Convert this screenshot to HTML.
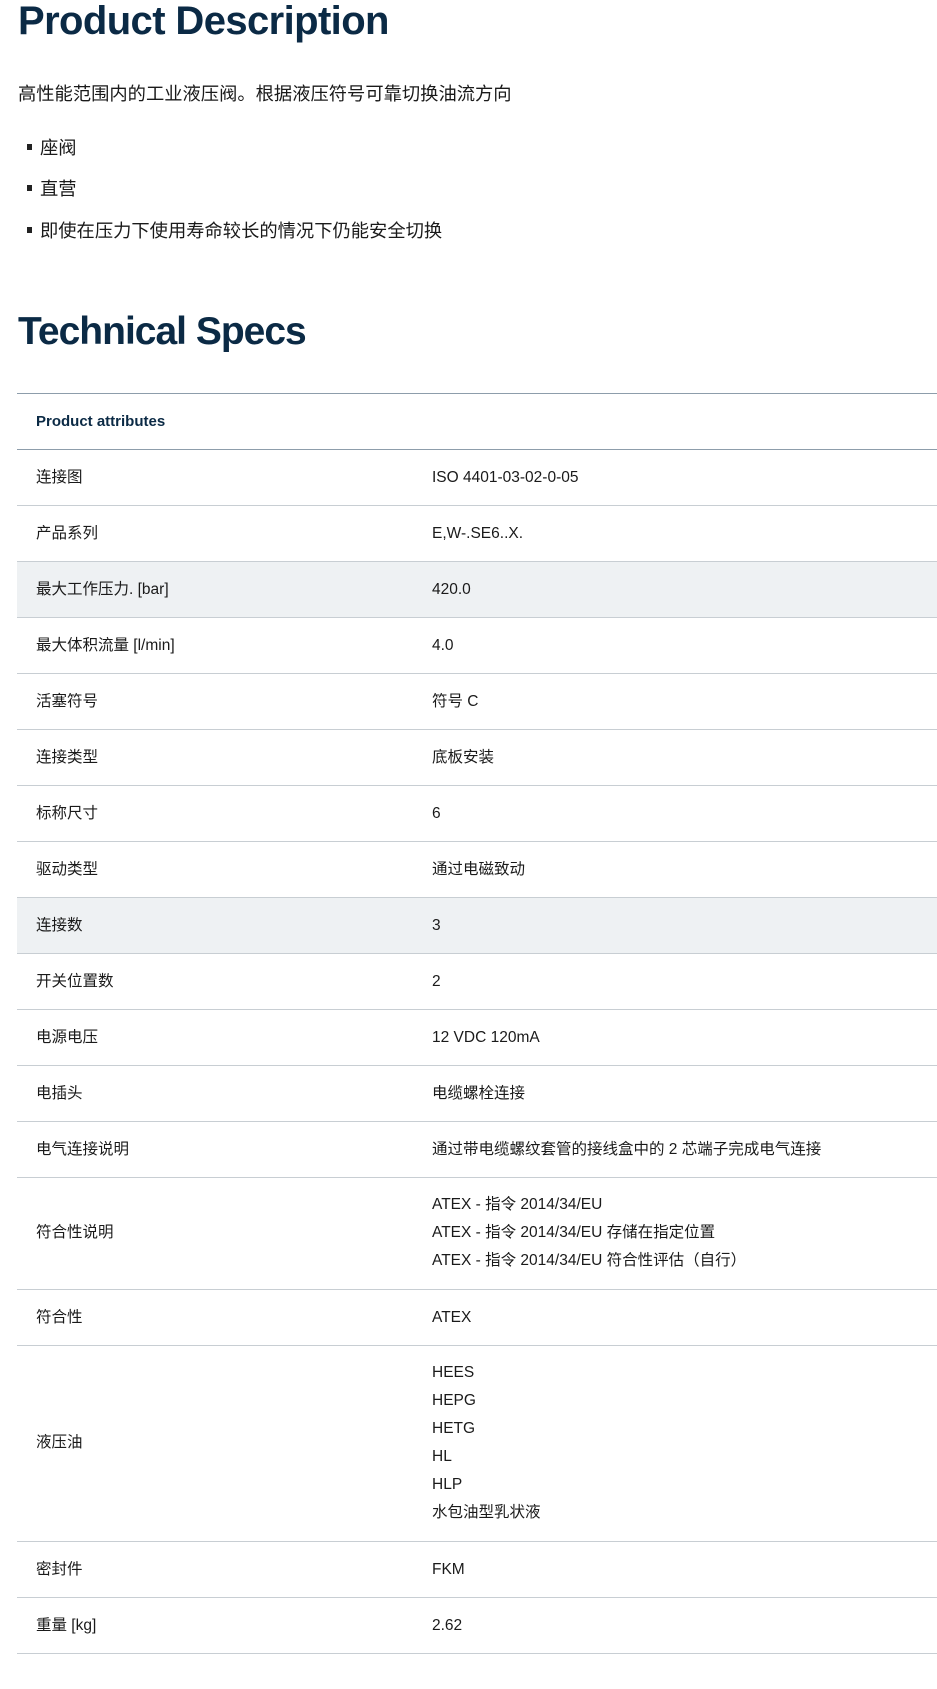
<!DOCTYPE html>
<html><head><meta charset="utf-8"><style>
body{margin:0;background:#fff;font-family:"Liberation Sans","Noto Sans CJK SC",sans-serif;color:#1a1a1a;width:937px;height:1689px;overflow:hidden}
h1{margin:0;position:absolute;left:18px;font-size:40px;font-weight:bold;color:#0b2a45;letter-spacing:-0.6px}
.p{position:absolute;left:18px;top:80px;font-size:18.3px}
.b{position:absolute;left:27px;font-size:18.3px}
.b span{display:inline-block;width:5px;height:6px;background:#222;margin-right:8px;vertical-align:middle;position:relative;top:-2px}
table{position:absolute;left:17px;top:393px;width:920px;border-collapse:collapse;font-size:15.5px}
td{padding:14px 0 14px 19px;line-height:27px;border-bottom:1px solid #c8ced3;vertical-align:middle}
td.v{padding-left:0;width:505px}
tr.h td{font-weight:bold;color:#0b2a45;border-top:1px solid #8d9dab;border-bottom:1px solid #8d9dab;font-size:15px}
tr.g td{background:#eef1f3}
tr.m td{padding-top:13px;padding-bottom:14px;line-height:28px}
</style></head><body>
<h1 style="top:-1px">Product Description</h1>
<div class="p">高性能范围内的工业液压阀。根据液压符号可靠切换油流方向</div>
<div class="b" style="top:134px"><span></span>座阀</div>
<div class="b" style="top:175px"><span></span>直营</div>
<div class="b" style="top:217px"><span></span>即使在压力下使用寿命较长的情况下仍能安全切换</div>
<h1 style="top:310px;font-size:39px;letter-spacing:-1px">Technical Specs</h1>
<table>
<tr class="h"><td colspan="2">Product attributes</td></tr>
<tr><td>连接图</td><td class="v">ISO 4401-03-02-0-05</td></tr>
<tr><td>产品系列</td><td class="v">E,W-.SE6..X.</td></tr>
<tr class="g"><td>最大工作压力. [bar]</td><td class="v">420.0</td></tr>
<tr><td>最大体积流量 [l/min]</td><td class="v">4.0</td></tr>
<tr><td>活塞符号</td><td class="v">符号 C</td></tr>
<tr><td>连接类型</td><td class="v">底板安装</td></tr>
<tr><td>标称尺寸</td><td class="v">6</td></tr>
<tr><td>驱动类型</td><td class="v">通过电磁致动</td></tr>
<tr class="g"><td>连接数</td><td class="v">3</td></tr>
<tr><td>开关位置数</td><td class="v">2</td></tr>
<tr><td>电源电压</td><td class="v">12 VDC 120mA</td></tr>
<tr><td>电插头</td><td class="v">电缆螺栓连接</td></tr>
<tr><td>电气连接说明</td><td class="v">通过带电缆螺纹套管的接线盒中的 2 芯端子完成电气连接</td></tr>
<tr class="m"><td>符合性说明</td><td class="v">ATEX - 指令 2014/34/EU<br>ATEX - 指令 2014/34/EU 存储在指定位置<br>ATEX - 指令 2014/34/EU 符合性评估（自行）</td></tr>
<tr><td>符合性</td><td class="v">ATEX</td></tr>
<tr class="m"><td>液压油</td><td class="v">HEES<br>HEPG<br>HETG<br>HL<br>HLP<br>水包油型乳状液</td></tr>
<tr><td>密封件</td><td class="v">FKM</td></tr>
<tr><td>重量 [kg]</td><td class="v">2.62</td></tr>
</table>
</body></html>
